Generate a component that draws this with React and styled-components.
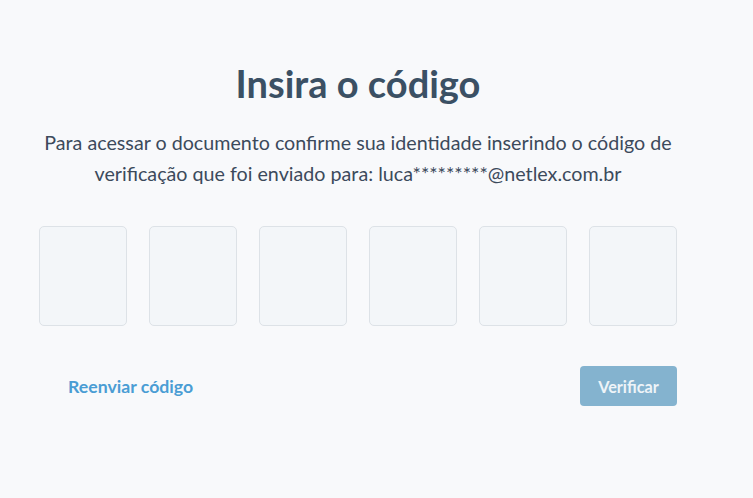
import React from "react";
import styled, { createGlobalStyle } from "styled-components";

const GlobalStyle = createGlobalStyle`
  body {
    margin: 0;
    background: #f8f9fb;
    font-family: Lato, "Open Sans", sans-serif;
  }
`;

const Page = styled.main`
  padding: 57px 39px 0;
`;

const Card = styled.section`
  width: 638px;
  display: flex;
  flex-direction: column;
  align-items: center;
`;

const Title = styled.h1`
  margin: 0;
  font-size: 38px;
  line-height: 52px;
  font-weight: 700;
  color: #3b5064;
`;

const Lead = styled.p`
  margin: 18px 0 0;
  font-size: 19.7px;
  line-height: 31px;
  color: #3c4a5b;
  text-align: center;
  white-space: nowrap;
`;

const CodeRow = styled.div`
  display: flex;
  gap: 22px;
  margin-top: 37px;
  align-self: stretch;
`;

const Digit = styled.input`
  width: 88px;
  height: 100px;
  box-sizing: border-box;
  border: 1px solid #dde2e7;
  border-radius: 5px;
  background: #f3f6f9;
  font-family: inherit;
  font-size: 32px;
  text-align: center;
  color: #3b5064;
  outline: none;
`;

const Actions = styled.div`
  align-self: stretch;
  display: flex;
  justify-content: space-between;
  align-items: center;
  margin-top: 40px;
  padding-left: 29px;
`;

const LinkButton = styled.button`
  border: 0;
  background: none;
  padding: 0;
  font-family: inherit;
  font-size: 17.7px;
  font-weight: 700;
  color: #4a9dd4;
  cursor: pointer;
`;

const Submit = styled.button`
  width: 97px;
  height: 40px;
  border: 0;
  border-radius: 4px;
  background: #84b3cf;
  color: #eef4f8;
  font-family: inherit;
  font-size: 16.2px;
  font-weight: 700;
`;

export default function App() {
  return (
    <>
      <GlobalStyle />
      <Page>
        <Card>
          <Title>Insira o código</Title>
          <Lead>
            Para acessar o documento confirme sua identidade inserindo o código de
            <br />
            verificação que foi enviado para: luca*********@netlex.com.br
          </Lead>
          <CodeRow>
            {[0, 1, 2, 3, 4, 5].map((i) => (
              <Digit key={i} maxLength={1} aria-label={`Dígito ${i + 1}`} />
            ))}
          </CodeRow>
          <Actions>
            <LinkButton type="button">Reenviar código</LinkButton>
            <Submit type="button" disabled>
              Verificar
            </Submit>
          </Actions>
        </Card>
      </Page>
    </>
  );
}
